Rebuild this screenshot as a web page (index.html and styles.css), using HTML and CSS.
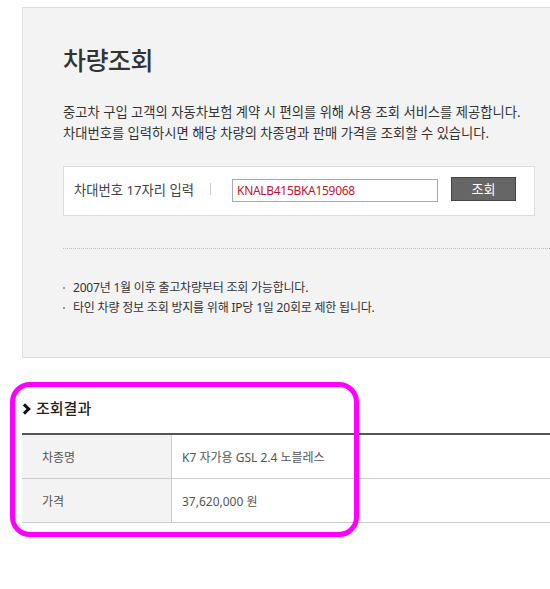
FILE: index.html
```html
<!DOCTYPE html>
<html lang="ko">
<head>
  <meta charset="UTF-8" />
  <meta name="viewport" content="width=device-width, initial-scale=1.0"/>
  <title>차량조회</title>
  <link rel="stylesheet" href="styles.css">
</head>
<body>
  <div class="page">
    <div class="lookup">
      <h1 class="title">차량조회</h1>
      <p class="desc">중고차 구입 고객의 자동차보험 계약 시 편의를 위해 사용 조회 서비스를 제공합니다.<br>차대번호를 입력하시면 해당 차량의 차종명과 판매 가격을 조회할 수 있습니다.</p>
      <div class="search">
        <span class="search-label">차대번호 17자리 입력</span>
        <span class="sep"></span>
        <input class="vin" type="text" value="KNALB415BKA159068">
        <button class="btn">조회</button>
      </div>
      <ul class="notes">
        <li>2007년 1월 이후 출고차량부터 조회 가능합니다.</li>
        <li>타인 차량 정보 조회 방지를 위해 IP당 1일 20회로 제한 됩니다.</li>
      </ul>
    </div>

    <div class="result">
      <h2 class="result-title"><span class="chev"></span>조회결과</h2>
      <table class="result-table">
        <tr>
          <th>차종명</th>
          <td>K7 자가용 GSL 2.4 노블레스</td>
        </tr>
        <tr>
          <th>가격</th>
          <td>37,620,000 원</td>
        </tr>
      </table>
    </div>

    <div class="highlight"></div>
  </div>
</body>
</html>
```

FILE: styles.css
```css
body {
  margin: 0;
  background: #fff;
  color: #333;
  font-family: "Noto Sans", "Noto Sans CJK KR", sans-serif;
}

.page {
  position: relative;
  width: 528px;
  height: 582px;
  padding: 7px 0 0 22px;
}

.lookup {
  background: #f3f3f3;
  border: 1px solid #ddd;
  border-right: none;
  padding: 34px 0 42px 40px;
  height: 273px;
}

.title {
  margin: 0;
  font-size: 25px;
  font-weight: 500;
  line-height: 36px;
  color: #333;
  letter-spacing: -0.5px;
}

.desc {
  margin: 24px 0 0;
  font-size: 13.3px;
  line-height: 21px;
  color: #333;
}

.search {
  display: flex;
  align-items: center;
  margin-top: 22px;
  width: 460px;
  height: 48px;
  background: #fff;
  border: 1px solid #ddd;
  padding-left: 10px;
}

.search-label {
  font-size: 13.3px;
  color: #444;
  width: 136px;
  margin-top: -4px;
}

.sep {
  width: 1px;
  height: 12px;
  background: #ccc;
  margin-top: -4px;
}

.vin {
  margin-left: 21px;
  width: 206px;
  height: 23px;
  box-sizing: border-box;
  border: 1px solid #aaa;
  padding: 0 4px;
  font-family: "Noto Sans", sans-serif;
  font-size: 12px;
  color: #c0142e;
  letter-spacing: -0.3px;
  margin-top: -2px;
}

.btn {
  margin-left: 13px;
  width: 65px;
  height: 24px;
  background: #666;
  border: 1px solid #444;
  color: #fff;
  font-family: "Noto Sans CJK KR", sans-serif;
  font-size: 13px;
  padding: 0;
  margin-top: -5px;
}

.notes {
  list-style: none;
  margin: 32px 0 0;
  padding: 29px 0 0;
  border-top: 1px dotted #bbb;
  font-size: 12px;
  line-height: 20px;
  color: #333;
  letter-spacing: -0.2px;
}

.notes li {
  position: relative;
  padding-left: 10px;
}

.notes li::before {
  content: "";
  position: absolute;
  left: 0;
  top: 9px;
  width: 2px;
  height: 2px;
  background: #999;
}

.result {
  margin-top: 28px;
}

.result-title {
  display: flex;
  align-items: center;
  margin: 0;
  height: 42px;
  padding-bottom: 5px;
  font-size: 15px;
  font-weight: 500;
  color: #222;
}

.chev {
  width: 5px;
  height: 5px;
  border-top: 3px solid #111;
  border-right: 3px solid #111;
  transform: rotate(45deg);
  margin: 3px 7px 0 -1px;
}

.result-table {
  width: 100%;
  border-collapse: collapse;
  border-top: 2px solid #555;
  font-size: 12px;
  color: #555;
}

.result-table th,
.result-table td {
  height: 43px;
  border-bottom: 1px solid #ccc;
  text-align: left;
  font-weight: normal;
  padding: 0;
}

.result-table th {
  width: 129px;
  padding-left: 20px;
  background: #f3f3f3;
  border-right: 1px solid #ccc;
}

.result-table td {
  padding-left: 10px;
}

.highlight {
  position: absolute;
  left: 10px;
  top: 382px;
  width: 339px;
  height: 145px;
  border: 5px solid #ff00ff;
  border-radius: 20px;
}
```
